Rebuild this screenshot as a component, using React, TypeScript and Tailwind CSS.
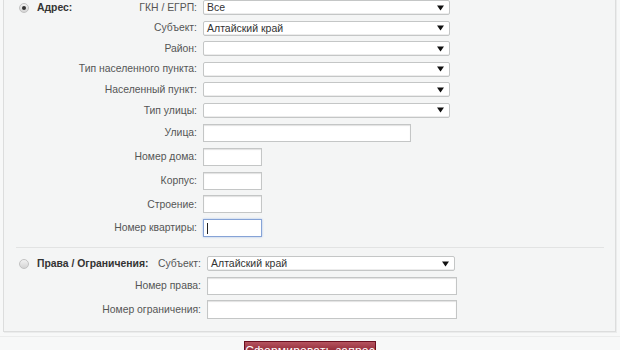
import { ReactNode } from "react";

const font = { fontFamily: '"Liberation Sans", Arial, sans-serif' };

function Arrow() {
  return (
    <svg width="7" height="6" viewBox="0 0 7 6" className="shrink-0">
      <polygon points="0,0.5 7,0.5 3.5,5.5" fill="#111" />
    </svg>
  );
}

function Select({ value, w }: { value?: string; w: string }) {
  return (
    <div
      className={`${w} h-[15px] flex items-center justify-between bg-white border border-[#c4c6c6] rounded-[2px] pl-[3px] pr-[5px] text-[10.5px] text-[#333] shadow-[inset_0_-1px_0_#ececec]`}
    >
      <span className="leading-none">{value ?? ""}</span>
      <Arrow />
    </div>
  );
}

function Field({ w, h, focus }: { w: string; h: string; focus?: boolean }) {
  return (
    <div
      className={`${w} ${h} bg-white border ${
        focus ? "border-[#86a3d6] shadow-[0_0_2px_#a9c0ea]" : "border-[#c4c6c6] shadow-[inset_0_1px_1px_#e2e2e2]"
      } flex items-center`}
    >
      {focus && <div className="ml-[3px] w-px h-[11px] bg-[#222]" />}
    </div>
  );
}

function Radio({ on }: { on?: boolean }) {
  return (
    <div className="w-[10px] h-[10px] rounded-full border border-[#c2c2c2] bg-gradient-to-b from-[#f2f2f2] to-[#d4d4d4] flex items-center justify-center">
      {on && <div className="w-[4px] h-[4px] rounded-full bg-[#333]" />}
    </div>
  );
}

function Row({
  label,
  children,
  left,
  h,
  mt,
  col,
}: {
  label: string;
  children: ReactNode;
  left?: ReactNode;
  h: string;
  mt: string;
  col: string;
}) {
  return (
    <div className={`flex items-center ${h} ${mt}`}>
      <div className={`${col} shrink-0 flex items-center justify-between`}>
        <div className="flex items-center">{left}</div>
        <span className="text-[10.4px] text-[#555] whitespace-nowrap">{label}</span>
      </div>
      <div className="ml-[6px]">{children}</div>
    </div>
  );
}

export default function App() {
  const aCol = "w-[193px]";
  const rCol = "w-[197px]";
  return (
    <div className="w-[620px] h-[350px] overflow-hidden bg-[#f7f8f8]" style={font}>
      <div className="ml-[3px] w-[613px] -mt-[10px] pt-[9px] pb-[12px] bg-[#f4f5f5] border border-[#dcdddd] shadow-[1px_1px_0_#ebecec]">
        {/* Адрес */}
        <Row
          label="ГКН / ЕГРП:"
          h="h-[15px]"
          mt="mt-0"
          col={aCol}
          left={
            <div className="flex items-center pl-[15px] gap-[8px]">
              <Radio on />
              <span className="text-[10.4px] font-bold text-[#333]">Адрес:</span>
            </div>
          }
        >
          <Select value="Все" w="w-[247px]" />
        </Row>
        <Row label="Субъект:" h="h-[15px]" mt="mt-[5.6px]" col={aCol}>
          <Select value="Алтайский край" w="w-[247px]" />
        </Row>
        <Row label="Район:" h="h-[15px]" mt="mt-[5.6px]" col={aCol}>
          <Select w="w-[247px]" />
        </Row>
        <Row label="Тип населенного пункта:" h="h-[15px]" mt="mt-[5.6px]" col={aCol}>
          <Select w="w-[247px]" />
        </Row>
        <Row label="Населенный пункт:" h="h-[15px]" mt="mt-[5.6px]" col={aCol}>
          <Select w="w-[247px]" />
        </Row>
        <Row label="Тип улицы:" h="h-[15px]" mt="mt-[5.6px]" col={aCol}>
          <Select w="w-[247px]" />
        </Row>
        <Row label="Улица:" h="h-[18.5px]" mt="mt-[6px]" col={aCol}>
          <Field w="w-[208px]" h="h-[18.5px]" />
        </Row>
        <Row label="Номер дома:" h="h-[18px]" mt="mt-[5.6px]" col={aCol}>
          <Field w="w-[59px]" h="h-[18px]" />
        </Row>
        <Row label="Корпус:" h="h-[18px]" mt="mt-[5.7px]" col={aCol}>
          <Field w="w-[59px]" h="h-[18px]" />
        </Row>
        <Row label="Строение:" h="h-[18px]" mt="mt-[5.7px]" col={aCol}>
          <Field w="w-[59px]" h="h-[18px]" />
        </Row>
        <Row label="Номер квартиры:" h="h-[18px]" mt="mt-[5.7px]" col={aCol}>
          <Field w="w-[59px]" h="h-[18px]" focus />
        </Row>

        <div className="mt-[10px] ml-[12px] mr-[11px] h-px bg-[#e2e3e3]" />

        {/* Права / Ограничения */}
        <Row
          label="Субъект:"
          h="h-[15px]"
          mt="mt-[8px]"
          col={rCol}
          left={
            <div className="flex items-center pl-[15px] gap-[8px]">
              <Radio />
              <span className="text-[10.4px] font-bold text-[#333]">Права / Ограничения:</span>
            </div>
          }
        >
          <Select value="Алтайский край" w="w-[248px]" />
        </Row>
        <Row label="Номер права:" h="h-[18.6px]" mt="mt-[5.7px]" col={rCol}>
          <Field w="w-[250px]" h="h-[18.6px]" />
        </Row>
        <Row label="Номер ограничения:" h="h-[19px]" mt="mt-[5px]" col={rCol}>
          <Field w="w-[250px]" h="h-[19px]" />
        </Row>
      </div>

      <div className="mt-[4px] h-px bg-[#ebecec]" />

      <div className="flex mt-[4px] ml-[244px]">
        <button className="w-[132px] h-[22px] bg-gradient-to-b from-[#b5545f] via-[#8e2535] to-[#7a1426] border border-[#6a1020] text-white text-[12px] tracking-[0.2px] flex items-start justify-center pt-[3px] leading-none">
          Сформировать запрос »
        </button>
      </div>
    </div>
  );
}
